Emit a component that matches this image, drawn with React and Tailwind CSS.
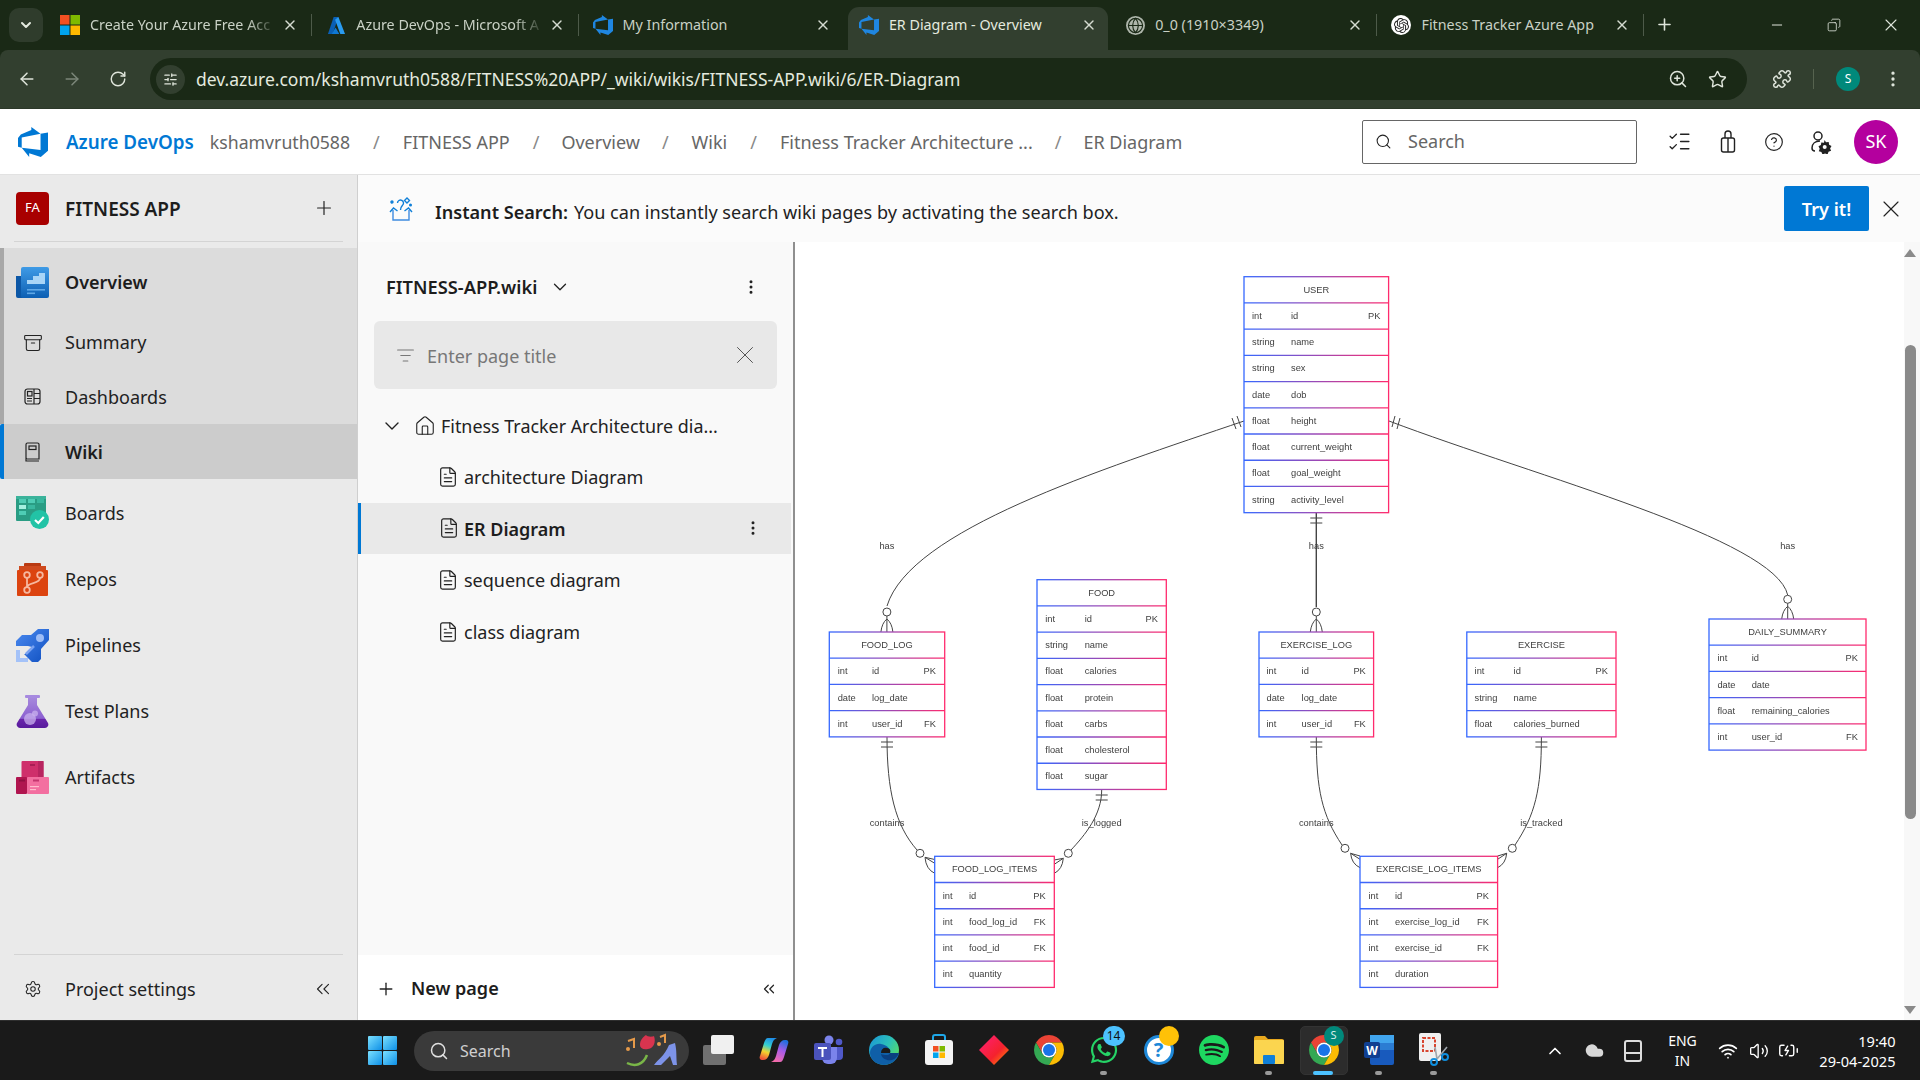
import React from 'react';
import { ArrowLeft, ArrowRight, RotateCw, SlidersHorizontal, ZoomIn, Star, Puzzle, EllipsisVertical, Minus, Copy, X, Plus, Search, ListChecks, CircleHelp, ChevronDown, ChevronsLeft, Settings, Archive, House, FileText, ListFilter, ChevronUp, Globe, Wifi, Volume2, Cloud, BatteryCharging } from 'lucide-react';
import { SiOpenai, SiSpotify } from 'react-icons/si';
import { FaWhatsapp } from 'react-icons/fa';

const SiAzuredevops = ({ size = 20, className = '' }) => (
  <svg width={size} height={size} viewBox="0 0 24 24" fill="currentColor" className={className}><path d="M0 8.877L2.247 5.91l8.405-3.416V.022l7.37 5.393L2.966 8.338v8.225L0 15.707zm24-4.45v14.651l-5.753 4.9-9.303-3.057v3.056l-5.978-7.416 15.057 1.798V5.415z" /></svg>
);
const AzureA = ({ size = 19 }) => (
  <svg width={size} height={size} viewBox="0 0 20 20"><path d="M7 1h5L6 19H1z" fill="#0a5fb4" /><path d="M12 1l7 18h-5L8.5 4z" fill="#2a9bf0" /><path d="M9 12l4 7h-8z" fill="#0f78d4" /></svg>
);

const MsLogo = ({ s = 20 }) => (
  <svg width={s} height={s} viewBox="0 0 20 20"><rect width="9.5" height="9.5" fill="#f25022" /><rect x="10.5" width="9.5" height="9.5" fill="#7fba00" /><rect y="10.5" width="9.5" height="9.5" fill="#00a4ef" /><rect x="10.5" y="10.5" width="9.5" height="9.5" fill="#ffb900" /></svg>
);

const ChromeIcon = ({ s = 34 }) => (
  <svg width={s} height={s} viewBox="4 4 40 40">
    <path d="M41.32 14A20 20 0 0 0 6.68 14L15.34 29A10 10 0 0 1 24 14z" fill="#ea4335" />
    <path d="M6.68 14A20 20 0 0 0 24 44L32.66 29A10 10 0 0 1 15.34 29z" fill="#34a853" />
    <path d="M41.32 14A20 20 0 0 1 24 44L32.66 29A10 10 0 0 0 24 14z" fill="#fbbc04" />
    <circle cx="24" cy="24" r="10" fill="#fff" /><circle cx="24" cy="24" r="8" fill="#1a73e8" />
  </svg>
);

const Tab = ({ icon, title, active, sep, fade }) => (
  <div className="w-[266.3px] h-full flex items-end shrink-0">
    <div className={active ? "ml-[3px] mr-[3px] pl-[11px] pr-[11px] pb-[7px] h-[43px] w-full flex items-center bg-[#323f2f] rounded-t-[11px] text-[#e4eadf]" : "pl-[14px] pr-[14px] pb-[7px] h-[43px] w-full flex items-center text-[#c9d1c5]"}>
      <div className="w-5 h-5 flex items-center justify-center shrink-0">{icon}</div>
      <div className={fade ? "ml-[10px] flex-1 whitespace-nowrap overflow-hidden text-[14.3px] [mask-image:linear-gradient(to_right,black_82%,transparent_98%)]" : "ml-[10px] flex-1 whitespace-nowrap overflow-hidden text-[14.3px]"}>{title}</div>
      <X size={16} strokeWidth={2} className="shrink-0 text-[#d5dcd1]" />
    </div>
    {sep && <div className="w-px h-[22px] bg-[#4d5a49] shrink-0 mb-[14px] -ml-px" />}
  </div>
);

const TabStrip = () => (
  <div className="h-[50px] flex items-stretch">
    <div className="w-[46px] h-full flex items-start pl-[9px] pt-[8px] shrink-0">
      <div className="w-[34px] h-[34px] rounded-[10px] bg-[#2f3c2c] flex items-center justify-center"><ChevronDown size={16} strokeWidth={3} className="text-[#e4eadf]" /></div>
    </div>
    <Tab icon={<MsLogo />} title="Create Your Azure Free Acc" fade sep />
    <Tab icon={<AzureA />} title="Azure DevOps - Microsoft A" fade sep />
    <Tab icon={<SiAzuredevops size={20} className="text-[#1f86e0]" />} title="My Information" />
    <Tab active icon={<SiAzuredevops size={20} className="text-[#1f86e0]" />} title="ER Diagram - Overview" />
    <Tab icon={<div className="w-[19px] h-[19px] rounded-full bg-[#aeb6ab] flex items-center justify-center"><Globe size={17} strokeWidth={1.6} className="text-[#1a2916]" /></div>} title="0_0 (1910×3349)" sep />
    <Tab icon={<div className="w-5 h-5 rounded-full bg-white flex items-center justify-center"><SiOpenai size={15} className="text-[#222]" /></div>} title="Fitness Tracker Azure App" sep />
    <div className="w-[42px] flex items-center justify-center pb-[1px] text-[#dfe5db]"><Plus size={19} strokeWidth={2} /></div>
    <div className="flex-1 flex items-center text-[#dfe5db] pl-[83px] pb-[1px]">
      <Minus size={16} strokeWidth={1.5} />
      <div className="ml-[42px]"><Copy size={14} strokeWidth={1.4} className="-scale-x-100" /></div>
      <div className="ml-[40px]"><X size={20} strokeWidth={1.3} /></div>
    </div>
  </div>
);

const Toolbar = () => (
  <div className="h-[59px] bg-[#323f2f] rounded-t-[8px] flex items-center border-b border-[#2c3829] text-[#dfe5db]">
    <div className="w-[150px] shrink-0 flex items-center pl-[17px]">
      <ArrowLeft size={20} strokeWidth={1.8} />
      <ArrowRight size={20} strokeWidth={1.8} className="ml-[25px] text-[#7c877a]" />
      <RotateCw size={18} strokeWidth={1.9} className="ml-[27px]" />
    </div>
    <div className="w-[1597px] h-[42px] rounded-full bg-[#1a2916] flex items-center pl-[6px] pr-[20px]">
      <div className="w-[29px] h-[29px] rounded-full bg-[#323f2f] flex items-center justify-center"><SlidersHorizontal size={15} strokeWidth={2} /></div>
      <div className="ml-[11px] text-[17.5px] text-[#e4eadf] whitespace-nowrap flex-1">dev.azure.com/kshamvruth0588/FITNESS%20APP/_wiki/wikis/FITNESS-APP.wiki/6/ER-Diagram</div>
      <ZoomIn size={20} strokeWidth={1.8} />
      <Star size={19} strokeWidth={1.8} className="ml-[20px]" />
    </div>
    <Puzzle size={20} strokeWidth={1.8} className="ml-[25px]" />
    <div className="w-px h-[20px] bg-[#56634f] ml-[21px]" />
    <div className="w-[24px] h-[24px] rounded-full bg-[#00897b] ml-[22px] text-[12px] text-white flex items-center justify-center">S</div>
    <EllipsisVertical size={20} strokeWidth={2} className="ml-[23px]" />
  </div>
);

const Slash = ({ ml }) => <span style={{ marginLeft: ml }} className="text-[#888] text-[18px]">/</span>;

const AppHeader = () => (
  <div className="h-[66px] bg-white border-b border-[#e2e2e2] flex items-center">
    <SiAzuredevops size={30} className="text-[#0078d4] ml-[18px] shrink-0" />
    <span className="ml-[18px] pt-[2px] text-[#0078d4] font-semibold text-[18.8px]">Azure DevOps</span>
    <div className="flex items-center whitespace-nowrap pt-[2px] text-[18px] text-[#666]">
      <span className="ml-[16px] text-[17.7px]">kshamvruth0588</span>
      <Slash ml={23} /><span className="ml-[23px]">FITNESS APP</span>
      <Slash ml={23} /><span className="ml-[22px]">Overview</span>
      <Slash ml={22} /><span className="ml-[23px]">Wiki</span>
      <Slash ml={23} /><span className="ml-[23px]">Fitness Tracker Architecture ...</span>
      <Slash ml={22} /><span className="ml-[22px]">ER Diagram</span>
    </div>
    <div className="ml-auto w-[275px] h-[44px] border border-[#666] rounded-[2px] flex items-center pl-[12px] text-[#666] text-[18px]">
      <Search size={17} strokeWidth={1.5} className="text-[#222]" /><span className="ml-[16px]">Search</span>
    </div>
    <div className="flex items-center text-[#222] ml-[30px]">
      <ListChecks size={25} strokeWidth={1.3} />
      <svg width="20" height="24" viewBox="0 0 20 24" className="ml-[26px]" fill="none" stroke="#222" strokeWidth="1.4"><rect x="3.5" y="8" width="13" height="14" rx="2" /><path d="M7 8V4a3 3 0 0 1 6 0v4M10 8v14" /></svg>
      <CircleHelp size={20} strokeWidth={1.4} className="ml-[26px]" />
      <svg width="22" height="24" viewBox="0 0 22 24" className="ml-[26px]" fill="none" stroke="#222" strokeWidth="1.5">
        <circle cx="8" cy="6" r="4" /><path d="M10 11C5 11 2 14 2 18c0 2 1 3 3 3" />
        <path d="M14.5 10l1.5 2.3 2.7-.3.4 2.7 2.4 1.3-1.4 2.4 1 2.4-2.6.9-.9 2.7-2.6-1-2.4 1.2-1.2-2.5-2.6-.8.9-2.6-1.2-2.4 2.4-1.2.4-2.7 2.7.4z" fill="#222" stroke="none" />
        <circle cx="14.7" cy="17" r="2" fill="#fff" stroke="none" />
      </svg>
      <div className="w-[44px] h-[44px] rounded-full bg-[#b4009e] text-white text-[18px] flex items-center justify-center ml-[22px] mr-[22px]">SK</div>
    </div>
  </div>
);

const OverviewIcon = () => (
  <svg width="33" height="31" viewBox="0 0 33 31">
    <defs><linearGradient id="ov" x1="0" y1="0" x2="0" y2="1"><stop offset="0" stopColor="#3f9be6" /><stop offset="1" stopColor="#0d5fb3" /></linearGradient></defs>
    <path d="M0 9h7v22H2a2 2 0 0 1-2-2z" fill="#0c57a6" /><rect x="5" width="28" height="31" rx="2" fill="url(#ov)" />
    <path d="M11 17v-4h6V9h6V6h6v11z" fill="#a8d5f7" /><rect x="11" y="22" width="18" height="1.6" fill="#5fa8e6" /><rect x="11" y="25.5" width="8" height="1.6" fill="#5fa8e6" />
  </svg>
);
const BoardsIcon = () => (
  <svg width="33" height="33" viewBox="0 0 33 33">
    <rect width="30" height="25" rx="1" fill="#2a9d84" /><rect width="30" height="3" fill="#3bb39b" />
    <rect x="3" y="3" width="7" height="4" fill="#4fcdb5" /><rect x="12" y="3" width="7" height="4" fill="#4fcdb5" /><rect x="21" y="3" width="7" height="4" fill="#39b89f" />
    <rect x="3" y="9" width="7" height="4" fill="#a5f0e0" /><rect x="12" y="9" width="7" height="4" fill="#39b89f" />
    <rect x="3" y="15" width="7" height="4" fill="#4fcdb5" />
    <circle cx="23.5" cy="23.5" r="9.5" fill="#22c3a6" /><path d="M19 24l3.3 3 5.5-6" fill="none" stroke="#fff" strokeWidth="2.2" />
  </svg>
);
const ReposIcon = () => (
  <svg width="33" height="33" viewBox="0 0 33 33">
    <rect x="8" width="17" height="5" rx="1" fill="#b93a12" /><rect x="3" y="3" width="27" height="8" fill="#cf4a1e" /><rect x="1" y="7" width="31" height="26" rx="1" fill="#dc4410" />
    <g fill="none" stroke="#f6b8a0" strokeWidth="1.8"><circle cx="11" cy="12" r="2.8" /><circle cx="24" cy="12" r="2.8" /><circle cx="11" cy="27" r="2.8" /><path d="M11 15v9M24 15c0 6-12 4-13 9" /></g>
  </svg>
);
const PipelinesIcon = () => (
  <svg width="33" height="33" viewBox="0 0 33 33">
    <defs><linearGradient id="pl" x1="0" y1="0" x2="1" y2="1"><stop offset="0" stopColor="#4b8af0" /><stop offset="1" stopColor="#0f4fc0" /></linearGradient></defs>
    <path d="M22 0h11v11L25 20v10l-3 3h-6l-7-7-1-0 8-8-4-1H0v-5l6-6h9z" fill="url(#pl)" />
    <circle cx="24" cy="9" r="4" fill="#9dbdf7" /><path d="M10 25l8-8" stroke="#7aa3f2" strokeWidth="2.5" />
    <path d="M0 21h4v8h8v4H0z" fill="#a4c2f8" />
  </svg>
);
const TestIcon = () => (
  <svg width="33" height="33" viewBox="0 0 33 33">
    <defs><linearGradient id="tp" x1="0" y1="0" x2="0" y2="1"><stop offset="0" stopColor="#a688dc" /><stop offset="0.68" stopColor="#8b5fd0" /><stop offset="0.7" stopColor="#6a25ab" /><stop offset="1" stopColor="#571b9c" /></linearGradient></defs>
    <rect x="9" width="15" height="3" rx="1" fill="#a78ae0" />
    <path d="M12 3h9v7l11 18a3.5 3.5 0 0 1-3 5H4a3.5 3.5 0 0 1-3-5l11-18z" fill="url(#tp)" />
    <circle cx="14" cy="24" r="6" fill="#c9b2ee" fillOpacity=".75" /><circle cx="19" cy="18.5" r="3" fill="#c9b2ee" fillOpacity=".75" />
  </svg>
);
const ArtifactsIcon = () => (
  <svg width="33" height="33" viewBox="0 0 33 33">
    <rect x="5.5" width="22" height="18" rx="1" fill="#cf2f6b" /><rect x="22" width="5.5" height="18" fill="#b82560" /><rect x="14" y="3" width="5" height="2" fill="#a91e55" />
    <rect y="16" width="11" height="17" rx="1" fill="#b0154f" /><rect x="11" y="16" width="22" height="17" rx="1" fill="#f36fa0" />
    <rect x="3" y="18.5" width="6" height="2" fill="#8f0f40" /><rect x="17" y="18.5" width="6" height="2" fill="#c4366f" /><rect x="14" y="25" width="9" height="1.2" fill="#fbc" /><rect x="14" y="28" width="6" height="1.2" fill="#fbc" />
  </svg>
);
const DashIcon = () => (
  <svg width="17" height="17" viewBox="0 0 17 17" fill="none" stroke="#222" strokeWidth="1.2"><rect x="1" y="1" width="15" height="15" rx="2.5" /><rect x="3.5" y="3.5" width="4.5" height="4.5" /><path d="M10 1v15M3 10.5h5M3 13h5M10 5.5h6M10 10.5h6" /></svg>
);
const WikiIcon = () => (
  <svg width="15" height="20" viewBox="0 0 15 20" fill="none" stroke="#222" strokeWidth="1.2"><path d="M2.5 1h10a1.5 1.5 0 0 1 1.5 1.5V17H2.5A1.5 1.5 0 0 1 1 15.5V2.5A1.5 1.5 0 0 1 2.5 1zM1 15.5V19h13" /><rect x="4" y="4" width="7" height="3.5" /></svg>
);

const NavItem = ({ icon, label, h, bold, drop }) => (
  <div style={{ height: h }} className="flex items-center">
    <div className="w-[65px] shrink-0 flex items-center justify-center">{icon}</div>
    <span className={`${drop ? 'pt-[2px] ' : ''}${bold ? "text-[18px] font-semibold text-[#1d1d1d]" : "text-[18px] text-[#222]"}`}>{label}</span>
  </div>
);

const Sidebar = () => (
  <div className="w-[358px] shrink-0 bg-[#eaeaea] border-r border-[#cfcfcf] flex flex-col">
    <div className="h-[66px] shrink-0 flex items-center pl-[16px] pr-[22px]">
      <div className="w-[33px] h-[33px] rounded-[4px] bg-[#a80000] text-white text-[13px] flex items-center justify-center">FA</div>
      <span className="ml-[16px] pt-[2px] text-[19px] font-semibold text-[#1d1d1d] flex-1">FITNESS APP</span>
      <Plus size={22} strokeWidth={1.3} className="text-[#222]" />
    </div>
    <div className="h-px bg-[#d4d4d4] mx-[14px] shrink-0" />
    <div className="h-[6px] shrink-0" />
    <div className="bg-[#dcdcdc] border-l-4 border-[#a8a8a8]">
      <div className="-ml-1">
        <NavItem h={68} icon={<OverviewIcon />} label="Overview" bold />
        <NavItem h={53} icon={<Archive size={20} strokeWidth={1.3} className="text-[#222]" />} label="Summary" />
        <NavItem h={55} drop icon={<DashIcon />} label="Dashboards" />
      </div>
    </div>
    <div className="h-[55px] bg-[#cccccc] border-l-4 border-[#0078d4] rounded-l-[2px] shrink-0">
      <div className="-ml-1"><NavItem h={55} drop icon={<WikiIcon />} label="Wiki" bold /></div>
    </div>
    <NavItem h={67} drop icon={<BoardsIcon />} label="Boards" />
    <NavItem h={66} icon={<ReposIcon />} label="Repos" />
    <NavItem h={66} icon={<PipelinesIcon />} label="Pipelines" />
    <NavItem h={66} icon={<TestIcon />} label="Test Plans" />
    <NavItem h={66} icon={<ArtifactsIcon />} label="Artifacts" />
    <div className="flex-1" />
    <div className="h-px bg-[#d4d4d4] mx-[14px] shrink-0" />
    <div className="h-[65px] shrink-0 flex items-center pr-[23px] pt-[3px]">
      <div className="w-[65px] flex items-center justify-center"><Settings size={18} strokeWidth={1.4} className="text-[#222]" /></div>
      <span className="text-[18px] text-[#222] flex-1">Project settings</span>
      <ChevronsLeft size={22} strokeWidth={1.2} className="text-[#222]" />
    </div>
  </div>
);

const TreeRow = ({ label, active }) => (
  <div className={active ? "h-[51.6px] mr-[2px] flex items-center pl-[77px] pr-[29px] bg-[#e9e9e9] border-l-[3px] border-[#0078d4]" : "h-[51.6px] flex items-center pl-[79px] pr-[28px]"}>
    <FileText size={22} strokeWidth={1.3} className="text-[#222] shrink-0" />
    <span className={active ? "ml-[4px] pt-[2px] text-[18px] font-semibold text-[#1d1d1d] flex-1" : "ml-[5px] pt-[2px] text-[18px] text-[#222] flex-1"}>{label}</span>
    {active && <EllipsisVertical size={18} strokeWidth={2} className="text-[#222]" />}
  </div>
);

const WikiPane = () => (
  <div className="w-[437px] shrink-0 bg-[#f9f9f9] flex flex-col border-r-[2px] border-[#8f8f8f]">
    <div className="h-[79px] shrink-0 flex items-center pl-[28px] pr-[33px] pt-[10px]">
      <span className="text-[18.3px] font-semibold text-[#1d1d1d]">FITNESS-APP.wiki</span>
      <ChevronDown size={22} strokeWidth={1.4} className="ml-[12px] text-[#222]" />
      <div className="flex-1" />
      <EllipsisVertical size={18} strokeWidth={2} className="text-[#222]" />
    </div>
    <div className="h-[68px] shrink-0 mx-[16px] w-[403px] bg-[#e8e8e8] rounded-[6px] flex items-center pl-[22px] pr-[17px] text-[#777]">
      <ListFilter size={19} strokeWidth={1.3} />
      <span className="ml-[12px] pt-[2px] text-[18px] flex-1">Enter page title</span>
      <X size={30} strokeWidth={0.8} className="text-[#555]" />
    </div>
    <div className="h-[10px] shrink-0" />
    <div className="h-[52px] shrink-0 flex items-center pl-[22px] pt-[2px]">
      <ChevronDown size={24} strokeWidth={1.4} className="text-[#222]" />
      <House size={22} strokeWidth={1.2} className="ml-[10px] text-[#222]" />
      <span className="ml-[5px] text-[17.9px] text-[#222] whitespace-nowrap">Fitness Tracker Architecture dia...</span>
    </div>
    <TreeRow label="architecture Diagram" />
    <TreeRow label="ER Diagram" active />
    <TreeRow label="sequence diagram" />
    <TreeRow label="class diagram" />
    <div className="flex-1" />
    <div className="h-[65px] shrink-0 bg-white flex items-center pl-[18px] pr-[15px] pt-[2px]">
      <Plus size={20} strokeWidth={1.6} className="text-[#222]" />
      <span className="ml-[15px] text-[18px] font-semibold text-[#1d1d1d] flex-1">New page</span>
      <ChevronsLeft size={18} strokeWidth={1.6} className="text-[#222]" />
    </div>
  </div>
);

const ENT = [
  { n: 'USER', x: 1244, x2: 1388.6, y: 276.7, t: 1252, m: 1291, k: 1380.5, r: [['int', 'id', 'PK'], ['string', 'name'], ['string', 'sex'], ['date', 'dob'], ['float', 'height'], ['float', 'current_weight'], ['float', 'goal_weight'], ['string', 'activity_level']] },
  { n: 'FOOD_LOG', x: 829.3, x2: 944.7, y: 632, t: 837.7, m: 872, k: 936, r: [['int', 'id', 'PK'], ['date', 'log_date'], ['int', 'user_id', 'FK']] },
  { n: 'FOOD', x: 1037, x2: 1166.3, y: 579.7, t: 1045.3, m: 1084.7, k: 1158, r: [['int', 'id', 'PK'], ['string', 'name'], ['float', 'calories'], ['float', 'protein'], ['float', 'carbs'], ['float', 'cholesterol'], ['float', 'sugar']] },
  { n: 'FOOD_LOG_ITEMS', x: 934.7, x2: 1054.3, y: 856.3, t: 942.7, m: 969, k: 1045.7, r: [['int', 'id', 'PK'], ['int', 'food_log_id', 'FK'], ['int', 'food_id', 'FK'], ['int', 'quantity']] },
  { n: 'EXERCISE_LOG', x: 1259, x2: 1373.6, y: 632, t: 1266.5, m: 1301.6, k: 1365.8, r: [['int', 'id', 'PK'], ['date', 'log_date'], ['int', 'user_id', 'FK']] },
  { n: 'EXERCISE', x: 1466.8, x2: 1616, y: 632, t: 1474.6, m: 1513.6, k: 1608, r: [['int', 'id', 'PK'], ['string', 'name'], ['float', 'calories_burned']] },
  { n: 'DAILY_SUMMARY', x: 1709, x2: 1866, y: 619, t: 1717.4, m: 1751.7, k: 1858, r: [['int', 'id', 'PK'], ['date', 'date'], ['float', 'remaining_calories'], ['int', 'user_id', 'FK']] },
  { n: 'EXERCISE_LOG_ITEMS', x: 1360, x2: 1497.6, y: 856.3, t: 1368.4, m: 1395, k: 1489, r: [['int', 'id', 'PK'], ['int', 'exercise_log_id', 'FK'], ['int', 'exercise_id', 'FK'], ['int', 'duration']] },
];
const RH = 26.22;

const Entity = ({ e, i }) => {
  const g = `url(#eg${i})`;
  const n = e.r.length + 1;
  const cx = (e.x + e.x2) / 2;
  return (
    <g>
      <defs><linearGradient id={`eg${i}`} gradientUnits="userSpaceOnUse" x1={e.x} y1="0" x2={e.x2} y2="0"><stop offset="0" stopColor="#3568ff" /><stop offset="1" stopColor="#ff2a6d" /></linearGradient></defs>
      <rect x={e.x} y={e.y} width={e.x2 - e.x} height={RH * n} fill="#fff" stroke={g} strokeWidth="1.3" />
      {e.r.map((_, k) => <line key={k} x1={e.x} x2={e.x2} y1={e.y + RH * (k + 1)} y2={e.y + RH * (k + 1)} stroke={g} strokeWidth="1.3" />)}
      <text x={cx} y={e.y + RH / 2} textAnchor="middle" dominantBaseline="central">{e.n}</text>
      {e.r.map((r, k) => (
        <g key={k}>
          <text x={e.t} y={e.y + RH * (k + 1.5)} dominantBaseline="central">{r[0]}</text>
          <text x={e.m} y={e.y + RH * (k + 1.5)} dominantBaseline="central">{r[1]}</text>
          {r[2] && <text x={e.k} y={e.y + RH * (k + 1.5)} textAnchor="end" dominantBaseline="central">{r[2]}</text>}
        </g>
      ))}
    </g>
  );
};

const Foot = ({ x, cy, end }) => (
  <g>
    <circle cx={x} cy={cy} r="4" fill="#fff" />
    <path d={`M${x} ${cy + 4}V${end}M${x} ${cy + 7}Q${x - 5} ${cy + 11} ${x - 6} ${end}M${x} ${cy + 7}Q${x + 5} ${cy + 11} ${x + 6} ${end}`} />
  </g>
);
const Bars = ({ x, y = 742 }) => <path d={`M${x - 6} ${y}h12M${x - 6} ${y + 5}h12`} />;
const SideFoot = ({ cx, cy, ax, ay, ex, top, bot }) => (
  <g>
    <circle cx={cx} cy={cy} r="4" fill="#fff" />
    <path d={`M${ax} ${ay}L${ex} ${top}M${ax} ${ay}L${ex} ${ay + 6}M${ax} ${ay}Q${ax + (ex - ax) * 0.1} ${bot - 4} ${ex} ${bot}`} />
  </g>
);

const Diagram = () => (
  <div className="flex-1 relative bg-white">
    <svg width="1125" height="778" viewBox="795 242 1125 778" className="block font-['Liberation_Sans'] text-[9.3px] blur-[0.3px]" fill="#404040">
      <g fill="none" stroke="#444" strokeWidth="1">
        <path d="M1244 421C1100 470 910 530 887 606" />
        <path d="M1389 421C1537 477 1775 539 1787.7 595" />
        <path d="M1316.3 513V607" strokeWidth="1.4" />
        <path d="M887 737C887 790 895 825 917 850" />
        <path d="M1101.7 790C1101.7 815 1085 835 1071 850" />
        <path d="M1316.3 737C1316.3 790 1322 815 1342 845" />
        <path d="M1541.4 737C1541.4 790 1535 815 1515 845" />
        <path d="M1232 418l4 11M1237 416l4 11M1395 416l-3 11M1400 418l-3 11" />
        <Bars x={1316.3} y={518} /><Bars x={887} /><Bars x={1101.7} y={795} /><Bars x={1316.3} /><Bars x={1541.4} />
        <Foot x={886.9} cy={612} end={632} /><Foot x={1316.3} cy={612} end={632} /><Foot x={1787.7} cy={599.3} end={619} />
        <SideFoot cx={920} cy={853.3} ax={925} ay={857.3} ex={934.7} top={859.5} bot={873.3} />
        <SideFoot cx={1068.3} cy={853.3} ax={1063.3} ay={858.3} ex={1054.3} top={860} bot={873.3} />
        <SideFoot cx={1345} cy={848.3} ax={1350.6} ay={853.3} ex={1360} top={856} bot={867.7} />
        <SideFoot cx={1512.3} cy={848.3} ax={1506.7} ay={853.3} ex={1497.6} top={856} bot={867.7} />
      </g>
      {ENT.map((e, i) => <Entity key={e.n} e={e} i={i} />)}
      {[['has', 886.9, 546], ['has', 1316.3, 546], ['has', 1787.7, 546], ['contains', 887, 823], ['is_logged', 1101.7, 823], ['contains', 1316.3, 823], ['is_tracked', 1541.4, 823]].map(([t, x, y], i) => (
        <text key={i} x={x} y={y} textAnchor="middle" dominantBaseline="central">{t}</text>
      ))}
    </svg>
    <div className="absolute right-0 top-0 bottom-0 w-[16px] bg-[#f8f8f8]">
      <div className="absolute left-0 top-[7px] w-0 h-0 border-x-[6px] border-x-transparent border-b-[8px] border-b-[#8a8a8a]" />
      <div className="absolute left-[1px] top-[103px] w-[11px] h-[474px] rounded-full bg-[#8a8a8a]" />
      <div className="absolute left-0 bottom-[6px] w-0 h-0 border-x-[6px] border-x-transparent border-t-[8px] border-t-[#8a8a8a]" />
    </div>
  </div>
);

const Banner = () => (
  <div className="h-[67px] bg-[#fbfbfb] flex items-center pl-[31px] pr-[15px] text-[18.1px] text-[#222]">
    <svg width="24" height="24" viewBox="0 0 24 24" fill="none" stroke="#0f7fd8" strokeWidth="1.4">
      <path d="M4 13v10h16V13" stroke="#3f8ce0" /><path d="M1 15l3.5-4 4 3M23 15l-3.5-4-4 3" /><path d="M8.5 6a3 3 0 1 1 5 2.3c-1.3 1.4-2 2.6-2 4.7" /><path d="M18 1l2.5 2.5L18 6l-2.5-2.5z" /><circle cx="3" cy="5" r="1" fill="#0f7fd8" /><circle cx="21.5" cy="8" r=".8" fill="#0f7fd8" />
    </svg>
    <span className="ml-[22px] pt-[9px] font-semibold text-[#1d1d1d]">Instant Search:</span>
    <span className="ml-[6px] pt-[9px] flex-1">You can instantly search wiki pages by activating the search box.</span>
    <div className="w-[85px] h-[45px] bg-[#0078d4] rounded-[2px] text-white font-semibold flex items-center justify-center pt-[2px]">Try it!</div>
    <X size={28} strokeWidth={1} className="ml-[8px] text-[#222]" />
  </div>
);

const TbIcon = ({ children, dot, active }) => (
  <div className="w-[55px] h-full flex items-center justify-center relative">
    {active && <div className="absolute left-[4px] right-[3px] top-[5px] bottom-[5px] rounded-[5px] bg-[#2c2c2c] border border-[#333]" />}
    <div className="relative flex items-center justify-center -mt-[2px]">{children}</div>
    {dot && <div className="absolute bottom-[5px] left-[24px] w-[7px] h-[4px] rounded-full bg-[#9a9a9a]" />}
    {active && <div className="absolute bottom-[5px] left-[17px] w-[20px] h-[4px] rounded-full bg-[#4cc2ff]" />}
  </div>
);

const Taskbar = () => (
  <div className="h-[60px] bg-[#1a1a1a] border-t border-[#2e2e2e] flex items-center shrink-0">
    <svg width="29" height="29" viewBox="0 0 29 29" className="ml-[368px] shrink-0">
      <defs><linearGradient id="wn" x1="0" y1="0" x2="1" y2="1"><stop offset="0" stopColor="#7be0ff" /><stop offset="1" stopColor="#0d8fe6" /></linearGradient></defs>
      <rect width="14" height="14" rx="1" fill="url(#wn)" /><rect x="15" width="14" height="14" rx="1" fill="url(#wn)" /><rect y="15" width="14" height="14" rx="1" fill="url(#wn)" /><rect x="15" y="15" width="14" height="14" rx="1" fill="url(#wn)" />
    </svg>
    <div className="ml-[17px] w-[275px] h-[40px] rounded-full bg-[#3a3a3a] flex items-center pl-[15px] pr-[7px] text-[#cfcfcf] shrink-0">
      <Search size={20} strokeWidth={1.8} className="text-[#e0e0e0]" />
      <span className="ml-[11px] text-[16px] flex-1">Search</span>
      <svg width="58" height="36" viewBox="0 0 58 36">
        <path d="M3 30c8 4 16 2 20-8" fill="none" stroke="#7ab648" strokeWidth="2.5" /><path d="M16 12c0-5 3-8 6-10 1 2 7 2 8 1 2 6 0 12-6 13-5 1-8-1-8-4z" fill="#d8344f" />
        <path d="M30 32c4-6 10-8 15-20l6-2c2 8 1 14 2 22h-4l-3-9-9 9z" fill="#7d93e8" />
        <path d="M4 8l6-2v9M36 4l5-2v8" fill="none" stroke="#e59a4a" strokeWidth="2" /><circle cx="4" cy="16" r="2" fill="#e59a4a" /><circle cx="35" cy="11" r="2" fill="#e59a4a" />
      </svg>
    </div>
    <div className="ml-[2px] flex h-full">
      <TbIcon><div className="relative w-[31px] h-[30px]"><div className="absolute left-0 bottom-0 w-[23px] h-[20px] bg-[#707070] rounded-[2px]" /><div className="absolute right-0 top-0 w-[23px] h-[19px] bg-[#f0f0f0] rounded-[2px]" /></div></TbIcon>
      <TbIcon>
        <svg width="30" height="30" viewBox="0 0 30 30">
          <defs><linearGradient id="cp1" x1="0.6" y1="0" x2="0.3" y2="1"><stop offset="0" stopColor="#1f8fe8" /><stop offset="0.35" stopColor="#35d0d0" /><stop offset="0.65" stopColor="#f2d52e" /><stop offset="1" stopColor="#f0503a" /></linearGradient><linearGradient id="cp2" x1="0.7" y1="0" x2="0.3" y2="1"><stop offset="0" stopColor="#1e6fe0" /><stop offset="0.45" stopColor="#a85ae8" /><stop offset="1" stopColor="#f56ca8" /></linearGradient></defs>
          <path d="M9 3h9c-3 1-4 3-5 6l-3 11c-1 3-3 5-6 5H3c-2 0-3-2-2-4L5 8c1-3 2-5 4-5z" fill="url(#cp1)" />
          <path d="M21 27h-9c3-1 4-3 5-6l3-11c1-3 3-5 6-5h1c2 0 3 2 2 4l-4 13c-1 3-2 5-4 5z" fill="url(#cp2)" />
        </svg>
      </TbIcon>
      <TbIcon>
        <svg width="30" height="30" viewBox="0 0 30 30"><circle cx="15" cy="5" r="4.5" fill="#7b83eb" /><circle cx="25" cy="7" r="3.3" fill="#5059c9" /><path d="M20 12h9v9a4 4 0 0 1-4 4h-5z" fill="#5059c9" /><path d="M8 12h15v11a6 6 0 0 1-6 6h-3a6 6 0 0 1-6-6z" fill="#7b83eb" /><rect y="8" width="17" height="17" rx="2" fill="#4b53bc" /><path d="M4 12h9v2H9.5v8h-2v-8H4z" fill="#fff" /></svg>
      </TbIcon>
      <TbIcon>
        <svg width="30" height="30" viewBox="0 0 30 30">
          <defs><linearGradient id="ed" x1="0" y1="0" x2="1" y2="0.6"><stop offset="0" stopColor="#1a93d8" /><stop offset="0.6" stopColor="#2cc0b8" /><stop offset="1" stopColor="#55d96a" /></linearGradient></defs>
          <circle cx="15" cy="15" r="15" fill="url(#ed)" /><path d="M1 18c0-6 6-10 11-9 6 1 9 4 9 9h9c-1 7-8 12-15 12S1 25 1 18z" fill="#0f5fa8" /><path d="M12 18c0-4 3-6 6-5 3 0 4 3 3 5z" fill="#1a1a1a" /><path d="M12 19c1 5 6 7 11 6 3-1 6-4 7-7H21c0 2-4 3-9 1z" fill="#0a3f80" />
        </svg>
      </TbIcon>
      <TbIcon>
        <svg width="28" height="31" viewBox="0 0 28 31"><path d="M8 8V3a2 2 0 0 1 2-2h8a2 2 0 0 1 2 2v5" fill="none" stroke="#1ea7e8" strokeWidth="2" /><rect y="6" width="28" height="25" rx="3" fill="#f4f4f4" /><rect x="8" y="12" width="5.5" height="5.5" fill="#f25022" /><rect x="14.5" y="12" width="5.5" height="5.5" fill="#7fba00" /><rect x="8" y="18.5" width="5.5" height="5.5" fill="#00a4ef" /><rect x="14.5" y="18.5" width="5.5" height="5.5" fill="#ffb900" /></svg>
      </TbIcon>
      <TbIcon>
        <svg width="30" height="30" viewBox="0 0 30 30"><defs><linearGradient id="dm" x1="0" y1="0" x2="1" y2="1"><stop offset="0" stopColor="#ff1f7a" /><stop offset="0.6" stopColor="#f5222d" /><stop offset="1" stopColor="#ff9a00" /></linearGradient></defs><path d="M15 0l15 15-15 15L0 15z" fill="url(#dm)" /></svg>
      </TbIcon>
      <TbIcon><ChromeIcon s={30} /></TbIcon>
      <TbIcon dot>
        <FaWhatsapp size={30} className="text-[#25d366]" />
        <div className="absolute -top-[9px] left-[14px] w-[22px] h-[20px] rounded-full bg-[#4cc2ff] text-[#111] text-[12px] flex items-center justify-center">14</div>
      </TbIcon>
      <TbIcon>
        <div className="w-[30px] h-[30px] rounded-full bg-white border-[3px] border-[#1e88d8] text-[#1e88d8] text-[20px] font-bold flex items-center justify-center">?</div>
        <div className="absolute -top-[9px] left-[15px] w-[20px] h-[20px] rounded-full bg-[#ffc107]" />
      </TbIcon>
      <TbIcon><SiSpotify size={30} className="text-[#1ed760]" /></TbIcon>
      <TbIcon dot>
        <svg width="30" height="28" viewBox="0 0 30 28"><path d="M0 2a2 2 0 0 1 2-2h9l3 3h14a2 2 0 0 1 2 2v21a2 2 0 0 1-2 2H2a2 2 0 0 1-2-2z" fill="#e9a91e" /><rect y="4" width="30" height="24" rx="1" fill="#fbd54f" /><rect x="9" y="19" width="12" height="9" rx="1" fill="#0f7fd8" /></svg>
      </TbIcon>
      <TbIcon active>
        <ChromeIcon s={30} />
        <div className="absolute -top-[9px] left-[15px] w-[20px] h-[20px] rounded-full bg-[#00897b] text-[#d7f0ea] text-[11px] flex items-center justify-center">S</div>
      </TbIcon>
      <TbIcon dot>
        <svg width="30" height="30" viewBox="0 0 30 30"><rect x="6" width="24" height="30" rx="2" fill="#185abd" /><rect x="6" width="24" height="8" fill="#41a5ee" /><rect x="6" y="8" width="24" height="7" fill="#2b7cd3" /><rect y="7" width="16" height="16" rx="2" fill="#103f91" /><text x="8" y="20" textAnchor="middle" fontSize="12" fontWeight="700" fill="#fff">W</text></svg>
      </TbIcon>
      <TbIcon dot>
        <svg width="30" height="34" viewBox="0 0 30 34"><rect width="22" height="28" rx="2" fill="#f0f0f0" /><rect x="4" y="5" width="12" height="13" fill="none" stroke="#d8452f" strokeWidth="2" strokeDasharray="3 1.5" /><path d="M16 14l2 12M28 14l-10 12" stroke="#9fa6ad" strokeWidth="1.6" fill="none" /><circle cx="15" cy="29" r="3" fill="none" stroke="#0f8fe0" strokeWidth="2" /><circle cx="26" cy="24" r="3" fill="none" stroke="#0f8fe0" strokeWidth="2" /></svg>
      </TbIcon>
    </div>
    <div className="ml-auto flex items-center h-full pr-[24.5px] text-white">
      <div className="w-[40px] flex justify-center"><ChevronUp size={20} strokeWidth={2} /></div>
      <div className="w-[40px] flex justify-center"><Cloud size={21} fill="#d8d8d8" strokeWidth={0} /></div>
      <div className="w-[39px] flex justify-center pr-[2px]"><div className="w-[18px] h-[22px] rounded-[3px] border-2 border-[#ddd] flex flex-col justify-end"><div className="h-[8px] border-t-2 border-[#ddd]" /></div></div>
      <div className="w-[58px] text-center text-[14px] leading-[20px]"><div>ENG</div><div>IN</div></div>
      <div className="w-[32px] flex justify-center"><Wifi size={20} strokeWidth={2} /></div>
      <div className="w-[30px] flex justify-center"><Volume2 size={20} strokeWidth={1.6} /></div>
      <div className="w-[30px] flex justify-center"><BatteryCharging size={21} strokeWidth={1.6} /></div>
      <div className="w-[92px] text-right text-[14.6px] leading-[20px]"><div>19:40</div><div>29-04-2025</div></div>
    </div>
  </div>
);

export default function App() {
  return (
    <div className="w-[1920px] h-[1080px] overflow-hidden flex flex-col bg-[#1a2916] font-['Noto_Sans',sans-serif]">
      <TabStrip />
      <Toolbar />
      <AppHeader />
      <div className="flex-1 flex min-h-0">
        <Sidebar />
        <div className="flex-1 flex flex-col min-w-0">
          <Banner />
          <div className="flex-1 flex min-h-0">
            <WikiPane />
            <Diagram />
          </div>
        </div>
      </div>
      <Taskbar />
    </div>
  );
}
